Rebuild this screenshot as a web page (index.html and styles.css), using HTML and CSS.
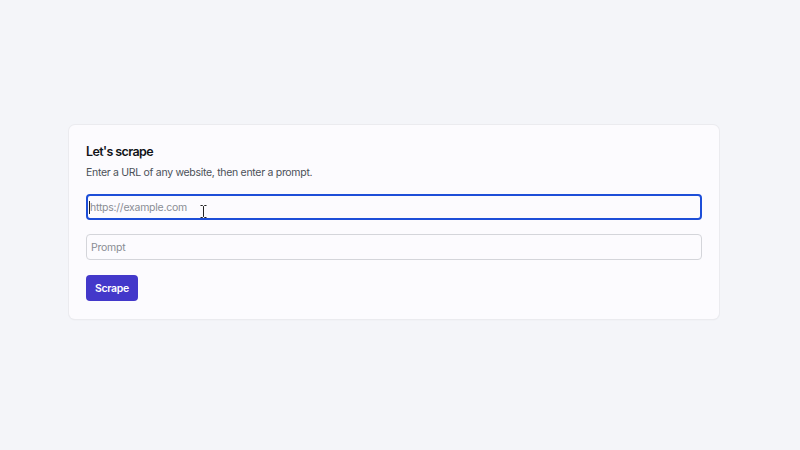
FILE: index.html
```html
<!DOCTYPE html>
<html>
<head>
<meta charset="utf-8">
<link rel="stylesheet" href="styles.css">
</head>
<body>
<main class="page">
  <section class="card">
    <h1 class="title">Let's scrape</h1>
    <p class="desc">Enter a URL of any website, then enter a prompt.</p>
    <div class="field focused">
      <span class="caret"></span>
      <span class="placeholder">https://example.com</span>
      <svg class="ibeam" width="7" height="13" viewBox="0 0 7 13"><path d="M0.5 0.5h2l1 1 1-1h2M3.5 1.5v10M0.5 12.5h2l1-1 1 1h2" fill="none" stroke="#222" stroke-width="1"/></svg>
    </div>
    <div class="field">
      <span class="placeholder">Prompt</span>
    </div>
    <div class="actions">
      <button class="btn">Scrape</button>
    </div>
  </section>
</main>
</body>
</html>
```
FILE: styles.css
```css
html, body {
  margin: 0;
  padding: 0;
  background: #f4f5f9;
  font-family: Inter, "Noto Sans", sans-serif;
}
.page {
  width: 800px;
  height: 450px;
  display: flex;
  flex-direction: column;
  align-items: flex-start;
  padding: 125px 0 0 69px;
  box-sizing: border-box;
}
.card {
  width: 650px;
  box-sizing: border-box;
  background: #fcfbfe;
  border-radius: 6px;
  box-shadow: 0 0 0 1px #ebebef, 0 1px 2px rgba(0,0,0,0.06);
  padding: 18px 17px 18px 17px;
  display: flex;
  flex-direction: column;
}
.title {
  margin: 0;
  font-size: 12.5px;
  line-height: 17px;
  font-weight: 600;
  letter-spacing: -0.6px;
  color: #111318;
}
.desc {
  margin: 5px 0 0;
  font-size: 10.5px;
  line-height: 16px;
  letter-spacing: -0.3px;
  color: #4b5058;
}
.field {
  position: relative;
  margin-top: 14px;
  height: 26px;
  box-sizing: border-box;
  border: 1px solid #d4d5da;
  border-radius: 4px;
  background: #fcfbfe;
  display: flex;
  align-items: center;
  padding-left: 4px;
}
.field.focused {
  margin-top: 13px;
  border: 2px solid #1d4ed8;
  padding-left: 1px;
}
.placeholder {
  font-size: 10.5px;
  letter-spacing: -0.25px;
  color: #8a8d94;
}
.caret {
  width: 1px;
  height: 13px;
  background: #222;
  margin-right: 0;
}
.ibeam {
  position: absolute;
  left: 112px;
  top: 9px;
}
.actions {
  margin-top: 15px;
  display: flex;
}
.btn {
  font-family: Inter, "Noto Sans", sans-serif;
  background: #4338ca;
  color: #fff;
  border: 0;
  border-radius: 4px;
  height: 26px;
  width: 52px;
  padding: 0;
  font-size: 10.5px;
  font-weight: 600;
  letter-spacing: -0.3px;
}
```
